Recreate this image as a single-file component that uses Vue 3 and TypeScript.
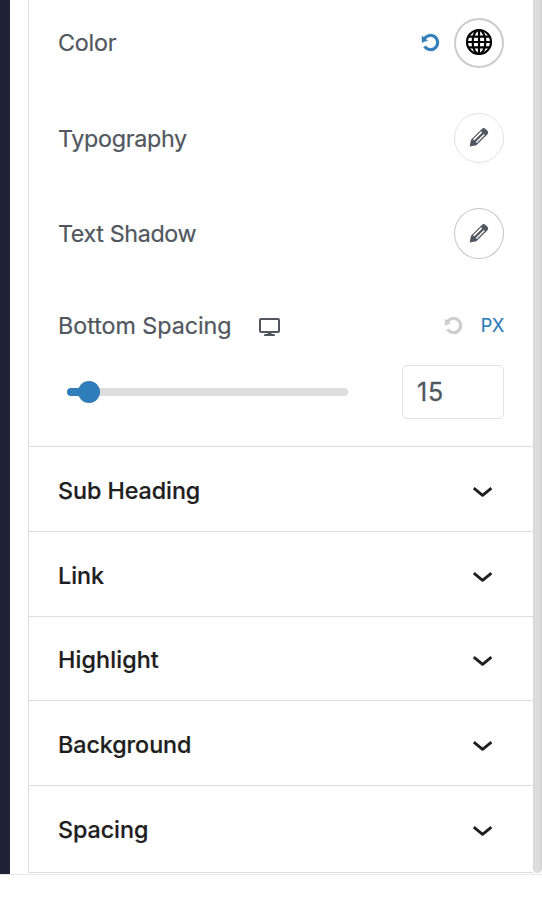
<script setup lang="ts">
import { ref } from 'vue'

interface Section {
  title: string
  cls: string
}

const spacing = ref<number>(15)
const sections: Section[] = [
  { title: 'Sub Heading', cls: 'sub-heading' },
  { title: 'Link', cls: 'link' },
  { title: 'Highlight', cls: 'highlight' },
  { title: 'Background', cls: 'background' },
  { title: 'Spacing', cls: 'spacing' },
]
const rotate =
  'M10.25 1.02c5.1 0 8.75 4.04 8.75 9s-3.65 9-8.75 9c-3.2 0-6.02-1.59-7.68-3.99l2.59-1.52c1.1 1.5 2.86 2.51 4.84 2.51 3.3 0 6-2.79 6-6s-2.7-6-6-6c-1.97 0-3.72 1-4.82 2.49L7 8.02l-6 2v-7L2.89 4.6c1.69-2.17 4.36-3.58 7.36-3.58z'
const pencil = 'M.6 19.6 2 12.8 13.3 1.6q1.5-1.2 3 .1l2.3 2.3q1.3 1.5.1 3L7.4 18.2z'
const pencilSlots = 'M4.6 12.9l8.1-8M7.3 15.5l8-8'
</script>

<template>
  <div class="editor">
    <div class="canvas-edge"></div>
    <div class="gutter"></div>
    <main class="panel">
      <div class="controls">
        <div class="row color">
          <span class="label l-color">Color</span>
          <svg class="reset" viewBox="0 0 20 20"><path :d="rotate" /></svg>
          <button class="circle swatch" aria-label="Color">
            <svg class="globe" viewBox="0 0 28 28">
              <circle cx="14" cy="14" r="12" />
              <ellipse cx="14" cy="14" rx="6.4" ry="12" />
              <path d="M14 2v24M2 14h24M3.6 8.7h20.8M3.6 19.3h20.8" />
            </svg>
          </button>
        </div>
        <div class="row typography">
          <span class="label l-typography">Typography</span>
          <button class="circle" aria-label="Typography">
            <svg class="pencil" viewBox="0 0 20 20">
              <path :d="pencil" />
              <path class="slots" :d="pencilSlots" />
            </svg>
          </button>
        </div>
        <div class="row shadow">
          <span class="label l-shadow">Text Shadow</span>
          <button class="circle tall" aria-label="Text Shadow">
            <svg class="pencil" viewBox="0 0 20 20">
              <path :d="pencil" />
              <path class="slots" :d="pencilSlots" />
            </svg>
          </button>
        </div>
        <div class="row spacing-head">
          <span class="label l-bottom">Bottom Spacing</span>
          <svg class="desktop" viewBox="0 0 21 19">
            <path class="screen" d="M1.9 1h17.2q.9 0 .9.9v11.2q0 .9-.9.9H1.9q-.9 0-.9-.9V1.9Q1 1 1.9 1z" />
            <path d="M8.5 14h4v2h2.4q1 0 1 1v1H5.1v-1q0-1 1-1h2.4z" />
          </svg>
          <svg class="reset muted" viewBox="0 0 20 20"><path :d="rotate" /></svg>
          <span class="unit">PX</span>
        </div>
        <div class="row slider-row">
          <div class="slider">
            <div class="fill"></div>
            <div class="knob"></div>
            <div class="track"></div>
          </div>
          <div class="number">{{ spacing }}</div>
        </div>
      </div>
      <div class="sections">
        <section v-for="s in sections" :key="s.title" class="section" :class="s.cls">
          <h2 class="title">{{ s.title }}</h2>
          <svg class="chevron" viewBox="0 0 20 12"><path d="M.8 2.1 9.6 9.3 18.4 2.1" /></svg>
        </section>
      </div>
    </main>
    <div class="scrollbar"></div>
  </div>
</template>

<style>
body {
  background: #fff;
}
</style>

<style scoped>
.editor {
  box-sizing: border-box;
  width: 542px;
  height: 875px;
  display: grid;
  grid-template-columns: 10px 18px 505px 9px;
  border-bottom: 1px solid #e6e6e6;
  font-family: Inter, 'Liberation Sans', sans-serif;
  background: #fff;
}
.canvas-edge {
  background: #202336;
}
.panel {
  box-sizing: border-box;
  height: 873px;
  border-left: 1px solid #ddd;
  border-bottom: 1px solid #ddd;
}
.scrollbar {
  height: 873px;
  border-radius: 0 0 5px 5px;
  background: linear-gradient(90deg, #d6d6d6, #dedede 30%, #dcdcdc 70%, #d2d2d2);
}
.controls {
  box-sizing: border-box;
  height: 446px;
  padding: 18px 29px 0;
}
.row {
  display: flex;
  align-items: center;
}
.color,
.typography {
  height: 50px;
  margin-bottom: 45px;
}
.shadow {
  height: 51px;
}
.label {
  margin-right: auto;
  font-size: 23.3px;
  line-height: 30px;
  color: #50575e;
  white-space: nowrap;
  -webkit-text-stroke: 0.2px #50575e;
}
.l-color {
  letter-spacing: -0.2px;
}
.l-typography {
  padding-top: 2px;
  letter-spacing: -0.3px;
}
.l-shadow {
  letter-spacing: -0.38px;
}
.reset {
  width: 19px;
  height: 19px;
  margin: 0 14px 1px 0;
  fill: #2f7db9;
  stroke: #2f7db9;
  stroke-width: 0.3;
}
.circle {
  box-sizing: border-box;
  display: flex;
  align-items: center;
  justify-content: center;
  width: 50px;
  height: 50px;
  padding: 0;
  border: 1px solid #e2e2e2;
  border-radius: 50%;
  background: #fff;
}
.circle.tall {
  height: 51px;
  border-color: #c3c4c7;
}
.circle.swatch {
  border: 2px solid #ccc;
}
.globe {
  width: 28px;
  height: 28px;
  margin-bottom: 2px;
  fill: none;
  stroke: #000;
  stroke-width: 2.2;
}
.pencil {
  width: 20px;
  height: 20px;
  margin-bottom: 2px;
  fill: #50575e;
}
.pencil .slots {
  fill: none;
  stroke: #fff;
  stroke-width: 1.5;
}
.spacing-head {
  height: 30px;
  margin-top: 52px;
}
.l-bottom {
  margin-right: 27px;
  letter-spacing: -0.04px;
}
.desktop {
  width: 21px;
  height: 19px;
  margin: 2px auto 0 0;
  fill: #50575e;
}
.desktop .screen {
  fill: none;
  stroke: #50575e;
  stroke-width: 2;
}
.reset.muted {
  fill: #ccc;
  stroke: #ccc;
  margin: 0 18px 2px 0;
}
.unit {
  font-size: 18px;
  line-height: 30px;
  letter-spacing: -0.3px;
  color: #2f7db9;
  -webkit-text-stroke: 0.2px #2f7db9;
}
.slider-row {
  height: 54px;
  margin-top: 24px;
  justify-content: space-between;
}
.slider {
  display: flex;
  align-items: center;
  width: 281px;
  margin-left: 9px;
}
.fill {
  width: 13px;
  height: 8px;
  margin-right: -2px;
  border-radius: 4px 0 0 4px;
  background: #2f7db9;
}
.knob {
  position: relative;
  width: 22px;
  height: 22px;
  border-radius: 50%;
  background: #2f7db9;
}
.track {
  flex: 1;
  height: 8px;
  margin-left: -2px;
  border-radius: 0 4px 4px 0;
  background: #ddd;
}
.number {
  box-sizing: border-box;
  width: 102px;
  height: 54px;
  padding-left: 14px;
  border: 1px solid #e2e4e7;
  border-radius: 5px;
  font-size: 25px;
  line-height: 53px;
  letter-spacing: 0.9px;
  color: #50575e;
  -webkit-text-stroke: 0.3px #50575e;
}
.sections {
  display: grid;
  grid-template-rows: 85px 85px 84px 85px 87px;
}
.section {
  display: flex;
  align-items: flex-start;
  justify-content: space-between;
  padding: 29px 40px 0 29px;
  border-top: 1px solid #ddd;
}
.section.highlight {
  padding-top: 28px;
}
.title {
  margin: 0;
  font-size: 23.3px;
  font-weight: 500;
  line-height: 30px;
  color: #1e1e1e;
  white-space: nowrap;
  -webkit-text-stroke: 0.2px #1e1e1e;
}
.sub-heading .title,
.background .title,
.spacing .title {
  letter-spacing: -0.06px;
}
.highlight .title {
  letter-spacing: 0.12px;
}
.chevron {
  width: 20px;
  height: 12px;
  margin-top: 10px;
  fill: none;
  stroke: #1e1e1e;
  stroke-width: 2.8;
  stroke-linejoin: round;
  overflow: visible;
}
</style>
